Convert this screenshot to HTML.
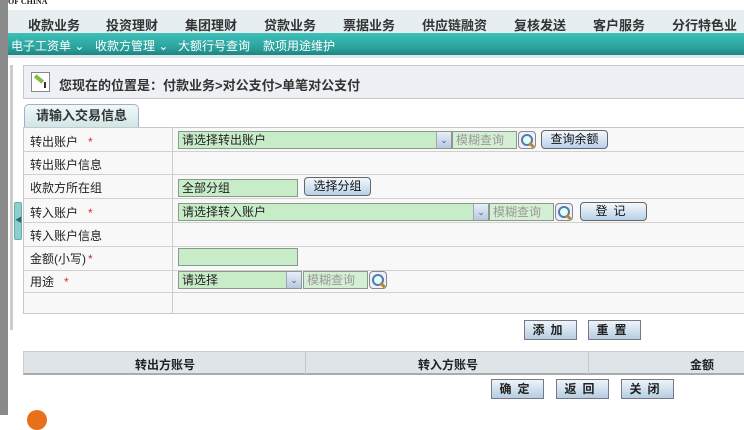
<!DOCTYPE html>
<html><head><meta charset="utf-8"><style>
*{margin:0;padding:0;box-sizing:border-box}
body{width:744px;height:415px;overflow:hidden;background:#fff;font-family:"Liberation Sans","Noto Sans CJK SC","WenQuanYi Zen Hei",sans-serif;font-size:12px;color:#222;position:relative}
.a{position:absolute}
.nav span{position:absolute;top:15px;font-weight:bold;font-size:13px;color:#333}
.sub span{position:absolute;top:37px;color:#fff;font-size:12px}
.inp{position:absolute;background:#c8ecc8;border:1px solid #8a9a8a;height:18px;font-size:12px;line-height:16px;padding-left:3px}
.ph{color:#999;background:#d4efd4}
.arr{position:absolute;width:15px;height:16px;background:linear-gradient(#e8eef8,#b8c8e0);border-left:1px solid #9ab;top:0;right:0;color:#3a5a9a;font-size:9px;text-align:center;line-height:16px}
.btn{position:absolute;height:19px;border:1px solid #666;border-radius:4px;background:linear-gradient(#f4f8fc,#b8d0ea);text-align:center;font-size:12px;line-height:17px;color:#111}
.b2{position:absolute;height:20px;border:1px solid #778;background:linear-gradient(#eef4fa,#b6cde2);text-align:center;font-size:12px;line-height:18px;letter-spacing:6px;font-weight:bold;color:#222}
.mag{position:absolute;width:18px;height:18px;border:1px solid #888;border-radius:4px;background:#eef;}
.mag:before{content:"";position:absolute;left:2px;top:2px;width:8px;height:8px;border:2px solid #5a7aa0;border-radius:50%;background:#dff}
.mag:after{content:"";position:absolute;left:11px;top:10px;width:3px;height:6px;background:#b58a2a;transform:rotate(-45deg)}
.row{position:absolute;left:23px;width:721px;border-top:1px solid #d0d0d0}
.lab{position:absolute;left:30px;font-size:12px}
.star{color:#c33;margin-left:10px}
</style></head><body>
<div class="a" style="left:0;top:0;width:8px;height:415px;background:#8a8a8a"></div>
<div class="a" style="left:8px;top:0;font:bold 8px 'Liberation Serif',serif;top:-3px">OF CHINA</div>
<div class="a nav" style="left:8px;top:10px;width:736px;height:23px;background:#e6eef2">
</div>
<div class="nav"><span style="left:28px">收款业务</span><span style="left:106px">投资理财</span><span style="left:185px">集团理财</span><span style="left:264px">贷款业务</span><span style="left:343px">票据业务</span><span style="left:422px">供应链融资</span><span style="left:514px">复核发送</span><span style="left:593px">客户服务</span><span style="left:672px">分行特色业务</span></div>
<div class="a" style="left:8px;top:33px;width:736px;height:22px;background:linear-gradient(#3cc0b8,#2aa09c 70%,#1e8480)"></div>
<div class="sub"><span style="left:11px">电子工资单 ⌄</span><span style="left:95px">收款方管理 ⌄</span><span style="left:178px">大额行号查询</span><span style="left:263px">款项用途维护</span></div>
<div class="a" style="left:8px;top:55px;width:736px;height:3px;background:#dfe8ec"></div>
<div class="a" style="left:10px;top:65px;width:3px;height:265px;background:#ccc"></div>
<div class="a" style="left:14px;top:202px;width:8px;height:38px;background:#8cd0cc;border:1px solid #6aa;border-radius:2px;color:#366;font-size:7px;line-height:36px">◀</div>
<div class="a" style="left:23px;top:65px;width:721px;height:34px;background:#edf1f5;border-top:1px solid #c4c8cc;border-bottom:1px solid #c4c8cc;border-left:1px solid #c4c8cc"></div>
<div class="a" style="left:31px;top:72px;width:19px;height:20px;border:1px solid #888;background:#fff"><div class="a" style="left:2px;top:4px;width:10px;height:4px;background:#8b4;transform:rotate(40deg)"></div><div class="a" style="left:12px;top:9px;width:2px;height:6px;background:#333"></div></div>
<div class="a" style="left:59px;top:75px;font-weight:bold;font-size:13px;color:#333">您现在的位置是：付款业务&gt;对公支付&gt;单笔对公支付</div>
<div class="a" style="left:24px;top:104px;width:115px;height:24px;background:linear-gradient(#f0f8f8,#cfe6e6);border:1px solid #aac;border-bottom:none;border-radius:5px 5px 0 0;text-align:center;font-weight:bold;font-size:13px;line-height:22px;color:#333">请输入交易信息</div>
<div class="a" style="left:23px;top:127px;width:721px;height:187px;background:#f8f8f8;border:1px solid #c8c8c8;border-right:none"></div>
<div class="a" style="left:172px;top:127px;width:1px;height:187px;background:#ccc"></div>
<div class="row" style="top:151px"></div><div class="row" style="top:174px"></div><div class="row" style="top:198px"></div><div class="row" style="top:222px"></div><div class="row" style="top:246px"></div><div class="row" style="top:270px"></div><div class="row" style="top:292px"></div>
<div class="lab" style="top:133px">转出账户<span class="star">*</span></div>
<div class="lab" style="top:156px">转出账户信息</div>
<div class="lab" style="top:179px">收款方所在组</div>
<div class="lab" style="top:204px">转入账户<span class="star">*</span></div>
<div class="lab" style="top:227px">转入账户信息</div>
<div class="lab" style="top:250px">金额(小写)<span class="star" style="margin-left:2px">*</span></div>
<div class="lab" style="top:273px">用途<span class="star">*</span></div>
<div class="inp" style="left:178px;top:131px;width:274px">请选择转出账户<div class="arr">⌄</div></div>
<div class="inp ph" style="left:452px;top:131px;width:65px">模糊查询</div>
<div class="mag" style="left:518px;top:131px"></div>
<div class="btn" style="left:541px;top:130px;width:67px">查询余额</div>
<div class="inp" style="left:178px;top:179px;width:120px">全部分组</div>
<div class="btn" style="left:304px;top:177px;width:67px">选择分组</div>
<div class="inp" style="left:178px;top:203px;width:311px">请选择转入账户<div class="arr">⌄</div></div>
<div class="inp ph" style="left:489px;top:203px;width:65px">模糊查询</div>
<div class="mag" style="left:555px;top:203px"></div>
<div class="btn" style="left:580px;top:202px;width:67px;letter-spacing:6px">登记</div>
<div class="inp" style="left:178px;top:248px;width:120px"></div>
<div class="inp" style="left:178px;top:271px;width:124px">请选择<div class="arr">⌄</div></div>
<div class="inp ph" style="left:303px;top:271px;width:65px">模糊查询</div>
<div class="mag" style="left:369px;top:271px"></div>
<div class="b2" style="left:524px;top:320px;width:53px">添加</div>
<div class="b2" style="left:588px;top:320px;width:53px">重置</div>
<div class="a" style="left:23px;top:351px;width:721px;height:24px;background:#dfe4e8;border-top:1px solid #c8ccd0;border-bottom:2px solid #a8acb0;border-left:1px solid #ccc"></div>
<div class="a" style="left:305px;top:351px;width:1px;height:23px;background:#c8c8c8"></div>
<div class="a" style="left:588px;top:351px;width:1px;height:23px;background:#c8c8c8"></div>
<div class="a" style="left:135px;top:356px;font-weight:bold">转出方账号</div>
<div class="a" style="left:418px;top:356px;font-weight:bold">转入方账号</div>
<div class="a" style="left:690px;top:356px;font-weight:bold">金额</div>
<div class="b2" style="left:491px;top:379px;width:53px">确定</div>
<div class="b2" style="left:556px;top:379px;width:53px">返回</div>
<div class="b2" style="left:621px;top:379px;width:53px">关闭</div>
<div class="a" style="left:27px;top:410px;width:20px;height:20px;border-radius:50%;background:#e8701a"></div>
</body></html>
